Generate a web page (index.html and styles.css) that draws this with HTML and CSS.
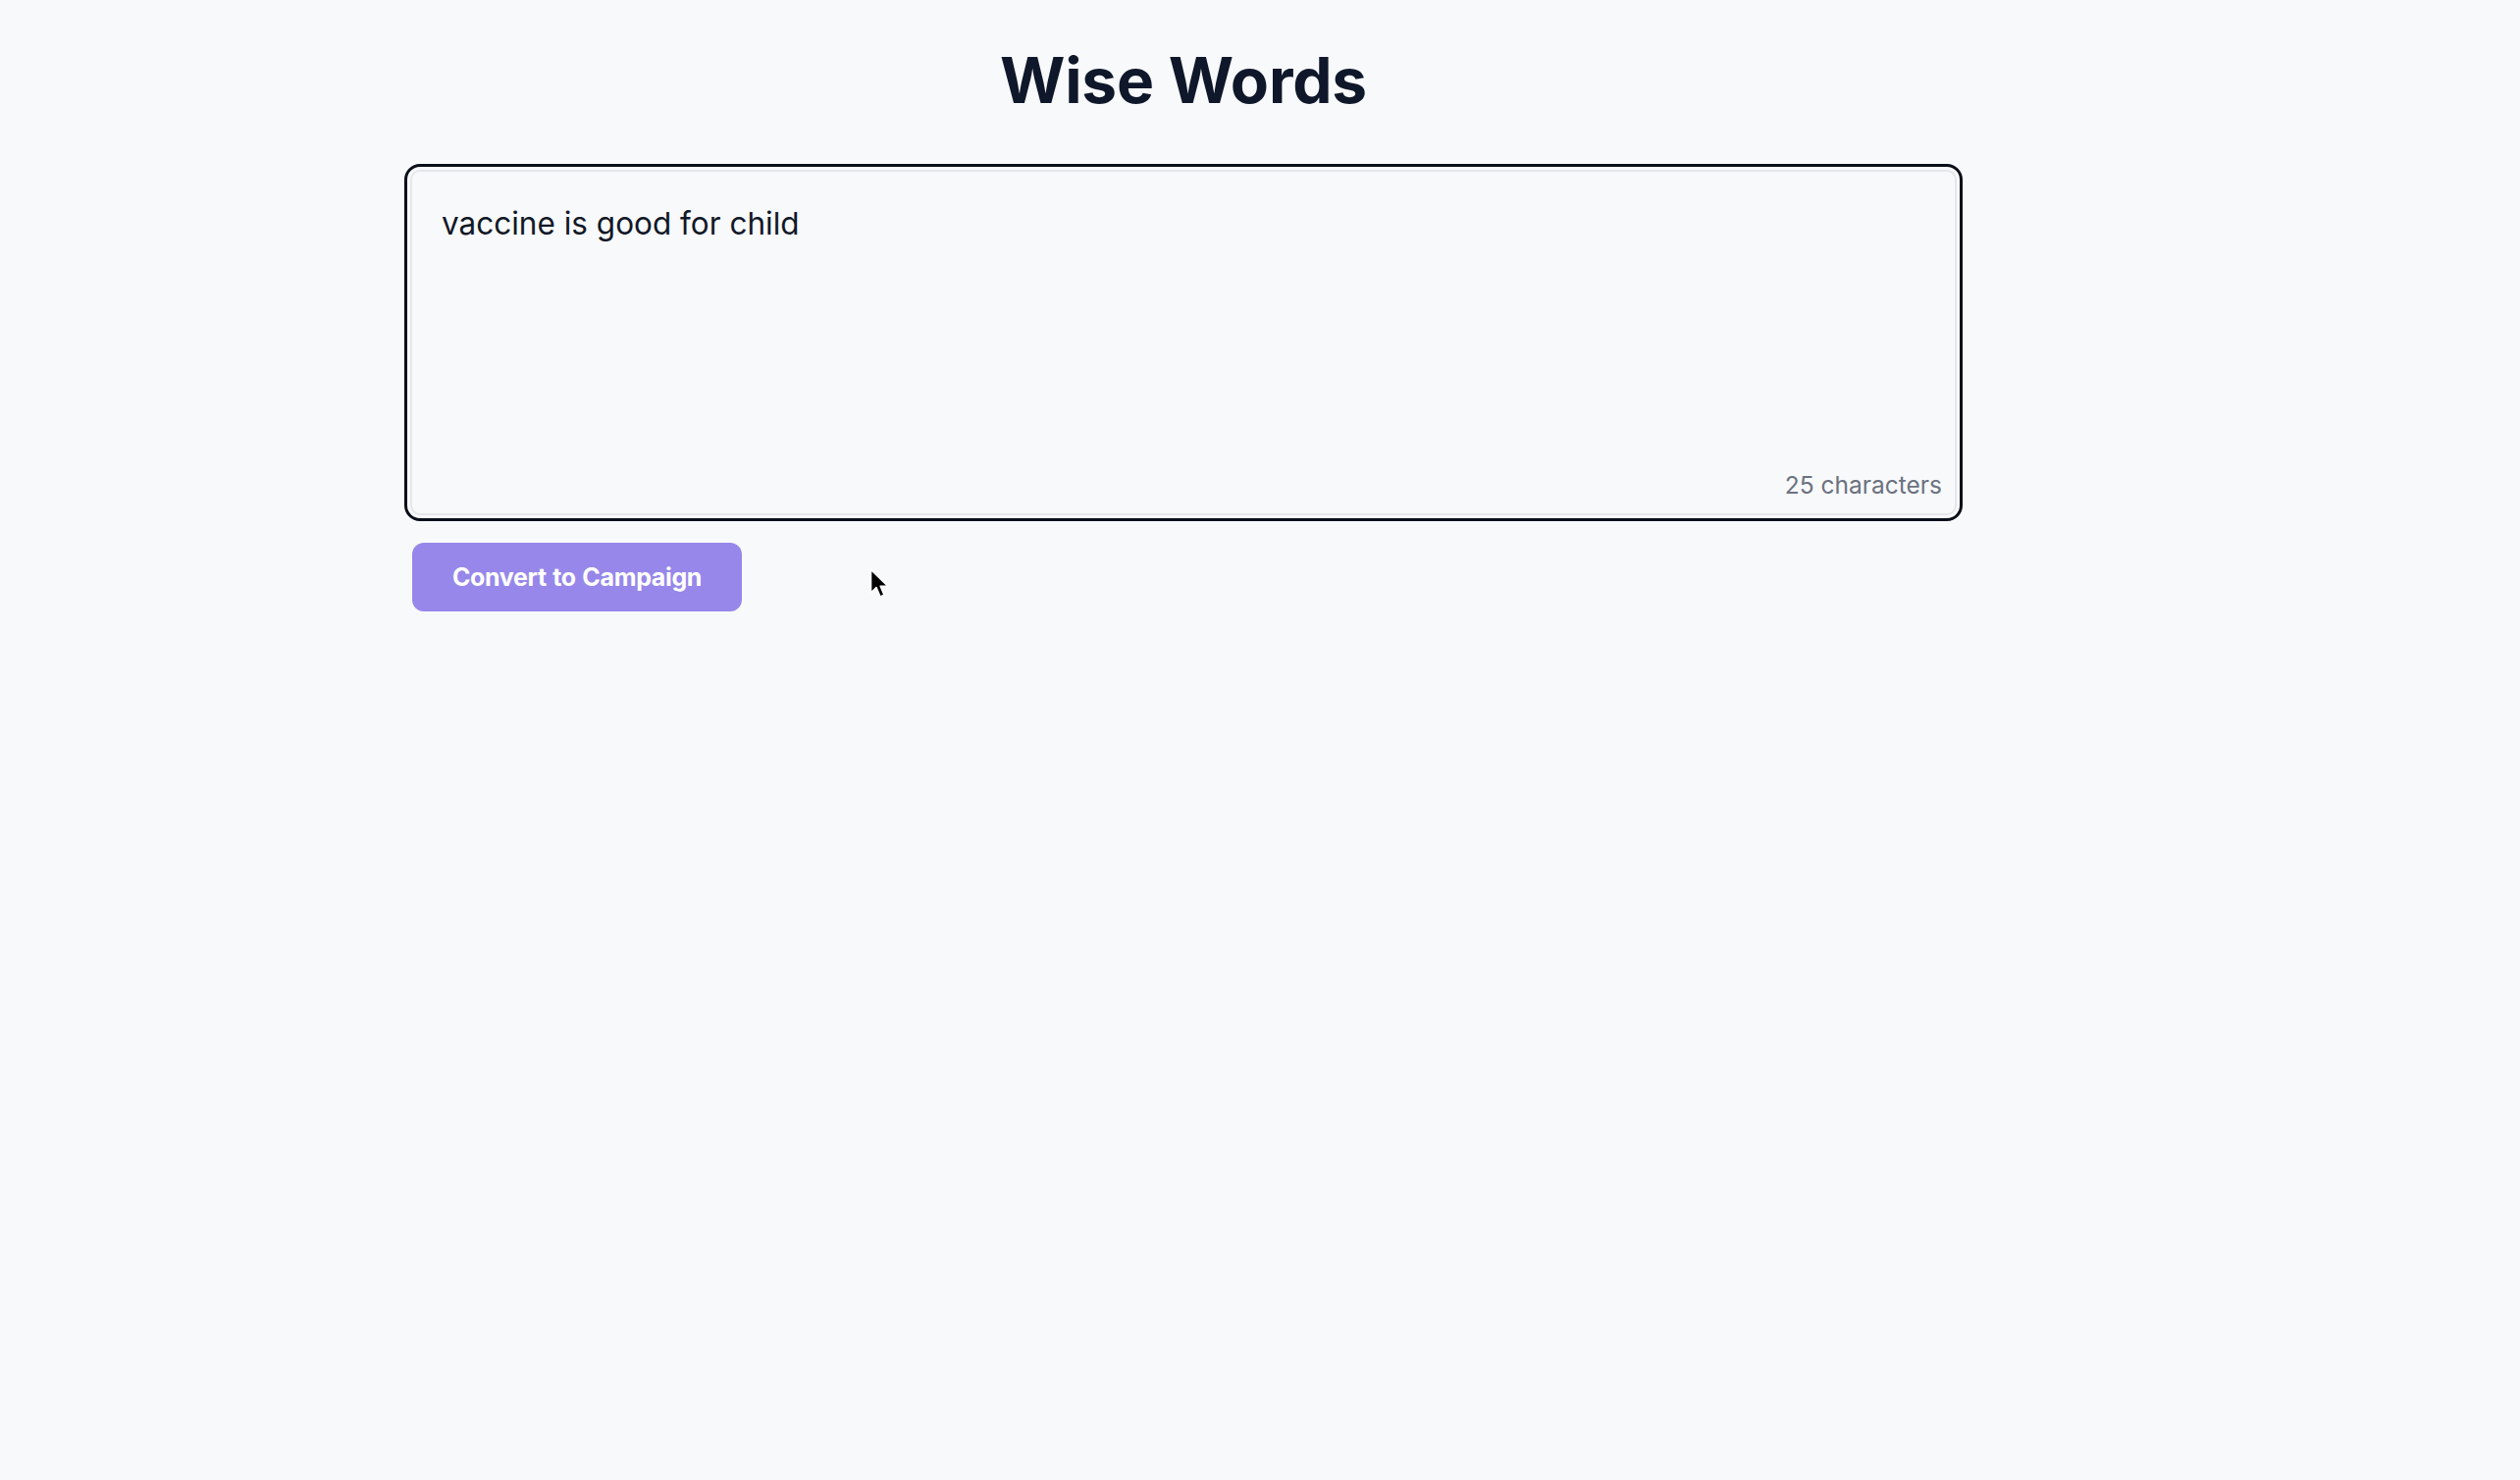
FILE: index.html
```html
<!DOCTYPE html>
<html lang="en">
<head>
<meta charset="utf-8">
<title>Wise Words</title>
<link rel="stylesheet" href="styles.css">
</head>
<body>
<main class="page">
  <h1 class="title">Wise Words</h1>
  <div class="editor">
    <div class="field">
      <div class="textarea">vaccine is good for child</div>
      <span class="count">25 characters</span>
    </div>
    <div class="actions">
      <button class="convert" type="button">Convert to Campaign</button>
    </div>
  </div>
</main>
<svg class="cursor" width="22" height="32" viewBox="0 0 22 32" aria-hidden="true">
  <path d="M1.5 1.5 L1.5 25 L7 19.5 L11 29 L15 27.3 L11.2 18.3 L19 18.3 Z" fill="#000" stroke="#fff" stroke-width="1.6" stroke-linejoin="round"/>
</svg>
</body>
</html>
```
FILE: styles.css
```css
html, body {
  margin: 0;
  padding: 0;
  background: #f8f9fb;
}
body {
  font-family: Inter, "Noto Sans", "Liberation Sans", sans-serif;
  color: #111827;
  min-height: 1508px;
}
.page {
  width: 1576px;
  margin-left: 418px;
  padding-top: 43px;
  display: flex;
  flex-direction: column;
}
.title {
  margin: 0;
  text-align: center;
  font-size: 64px;
  line-height: 77px;
  font-weight: 700;
  color: #0f172a;
  letter-spacing: -0.2px;
}
.editor {
  margin-top: 53px;
  display: flex;
  flex-direction: column;
  gap: 28px;
}
.field {
  position: relative;
}
.textarea {
  box-sizing: border-box;
  height: 352px;
  border: 2px solid #e5e7eb;
  border-radius: 10px;
  padding: 29px 30px;
  font-size: 31.5px;
  line-height: 47px;
  color: #111827;
  background: #f8f9fb;
  outline: 3px solid #0b0f19;
  outline-offset: 3px;
}
.count {
  position: absolute;
  right: 15px;
  bottom: 16px;
  font-size: 24.5px;
  line-height: 30px;
  color: #6b7280;
}
.actions {
  display: flex;
  padding-left: 2px;
}
.convert {
  box-sizing: border-box;
  height: 70px;
  width: 336px;
  border: none;
  border-radius: 12px;
  background: #9787ea;
  color: #ffffff;
  font-family: Inter, "Noto Sans", "Liberation Sans", sans-serif;
  font-size: 25px;
  font-weight: 700;
  letter-spacing: -0.35px;
  word-spacing: 1px;
  padding: 0;
}
.cursor {
  position: absolute;
  left: 886px;
  top: 579px;
}
```
